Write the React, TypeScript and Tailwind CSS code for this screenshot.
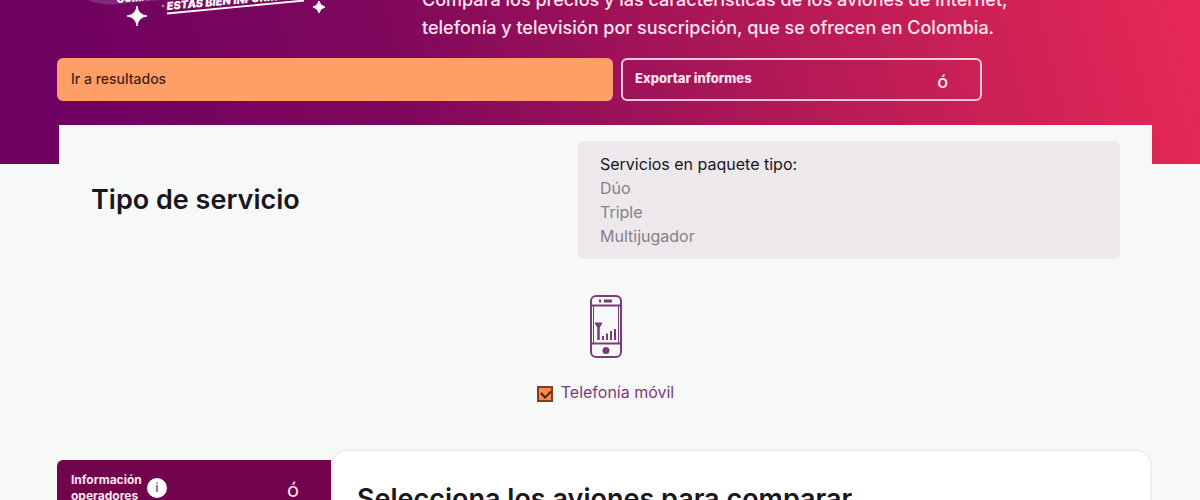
import { useState } from 'react'

const packageTypes = ['Dúo', 'Triple', 'Multijugador']

function CampaignLogo() {
  return (
    <svg width="270" height="42" viewBox="0 0 270 42" aria-hidden="true">
      <path d="M24 -4 Q40 8 72 3 L128 -2 V-8 Z" fill="#822a7c" />
      <text
        x="60"
        y="3"
        fill="#fff"
        fontSize="10"
        fontWeight="900"
        fontStyle="italic"
        fontFamily="Inter, sans-serif"
        transform="rotate(-5 60 3)"
      >
        COMPARA
      </text>
      <path d="M104 -8 L250 -16 L247 -1 L106 12 Z" fill="#7a0660" />
      <text
        x="110"
        y="10"
        fill="#fff"
        fontSize="11"
        fontWeight="900"
        fontStyle="italic"
        fontFamily="Inter, sans-serif"
        transform="rotate(-5 110 10)"
      >
        ESTÁS BIEN INFORMADO
      </text>
      <circle cx="106" cy="6" r="1.5" fill="#a8873c" />
      <path d="M110 13.5 L247 0.5" stroke="#fff" strokeWidth="1.8" />
      <path d="M80 6 Q81 15 90 16 Q81 17 80 26 Q79 17 70 16 Q79 15 80 6 Z" fill="#fff" stroke="#fff" />
      <path d="M262 1 Q263 6 268 7 Q263 8 262 13 Q261 8 256 7 Q261 6 262 1 Z" fill="#fff" stroke="#fff" />
    </svg>
  )
}

function MobileIcon() {
  return (
    <svg width="32" height="63" viewBox="0 0 32 63" fill="none" stroke="#7b3b78" aria-hidden="true">
      <rect x="1" y="1" width="30" height="61" rx="5" strokeWidth="2" />
      <path d="M2 10.5 H30 M2 48.5 H30" strokeWidth="2" />
      <path d="M3.5 10 V49 M28.5 10 V49" strokeWidth="1" />
      <path d="M9 6 H11 M14 6 H22" strokeWidth="3" />
      <path d="M5 28 H12 L9.5 32 H7.5 Z" fill="#7b3b78" />
      <path d="M8.5 30 V45" strokeWidth="2.5" />
      <path d="M13 41 V45 M17 38.5 V45 M21 36 V45 M25 34 V45" strokeWidth="2" />
      <circle cx="16" cy="55.5" r="3.5" fill="#7b3b78" stroke="none" />
    </svg>
  )
}

export default function App() {
  const [mobile, setMobile] = useState(true)

  return (
    <div className="h-screen overflow-hidden bg-[#f7f9f8] font-['Inter',sans-serif] text-[#1b1520]">
      <header className="overflow-hidden bg-[linear-gradient(75deg,#6f0061_5%,#7e075c_33%,#b01857_63%,#e52855_98%)] px-[57px] pb-[63px]">
        <div className="flex items-start">
          <div className="w-[365px] shrink-0">
            <CampaignLogo />
          </div>
          <p className="-mt-3.5 max-w-[600px] text-lg leading-7 font-medium text-[#fde4f0]">
            Compara los precios y las características de los aviones de Internet,
            telefonía y televisión por suscripción, que se ofrecen en Colombia.
          </p>
        </div>
        <div className="mt-4 grid grid-cols-[556fr_361fr_153fr] gap-2">
          <button type="button" className="h-[43px] rounded-md bg-[#ff9f68] px-3.5 pb-0.5 text-left text-sm font-medium text-[#4a1d14]">
            Ir a resultados
          </button>
          <button
            type="button"
            className="flex h-[43px] items-center justify-between rounded-md border-2 border-[#f8c9dc] pr-8 pb-0.5 pl-3 text-[13px] font-extrabold text-[#fde4f0]"
          >
            <span>Exportar informes</span>
            <span className="pt-1.5 text-lg font-medium">ó</span>
          </button>
        </div>
      </header>

      <main>
        <section className="relative -mt-[39px] mr-12 ml-[59px] bg-[#f7f9f8] px-8 pt-4">
          <div className="grid grid-cols-[487fr_542fr] items-center">
            <h2 className="text-[27px] leading-8 font-semibold">Tipo de servicio</h2>
            <div className="rounded-md bg-[#ece8ec] px-[22px] py-[11px] text-base leading-6">
              <p>Servicios en paquete tipo:</p>
              <ul className="text-[#858187]">
                {packageTypes.map((type) => (
                  <li key={type}>{type}</li>
                ))}
              </ul>
            </div>
          </div>

          <div className="mt-9 flex flex-col items-center">
            <MobileIcon />
            <label className="mt-[22px] flex items-center gap-2 text-base leading-6 text-[#7b3b78]">
              <span className="relative mt-1 block size-4">
                <input
                  type="checkbox"
                  checked={mobile}
                  onChange={(e) => setMobile(e.target.checked)}
                  className="block size-4 appearance-none border-2 border-[#78401f] bg-[#f98a4b]"
                />
                {mobile && (
                  <svg viewBox="0 0 16 16" className="pointer-events-none absolute inset-0" fill="none" stroke="#4c2412" strokeWidth="2">
                    <path d="M4 7 L8 11.5 L14 5.5" />
                  </svg>
                )}
              </span>
              Telefonía móvil
            </label>
          </div>
        </section>

        <div className="mt-[45px] mr-12 ml-[57px] grid grid-cols-[274fr_821fr] items-start">
          <button
            type="button"
            className="mt-[11px] flex h-[72px] items-start rounded-tl-md bg-[#72044d] pt-3 pr-8 pl-3.5 text-left text-[#fde4f0]"
          >
            <span className="w-[76px] text-xs leading-4 font-bold">Información operadores</span>
            <span className="mt-1.5 flex size-5 items-center justify-center rounded-full bg-white text-xs leading-none font-bold text-[#8a6a86]">
              i
            </span>
            <span className="mt-1.5 ml-auto text-xl leading-6">ó</span>
          </button>
          <section className="h-[120px] rounded-2xl border-2 border-[#eeeeef] bg-white px-6 pt-8">
            <h2 className="text-[27px] leading-8 font-semibold">Selecciona los aviones para comparar</h2>
          </section>
        </div>
      </main>
    </div>
  )
}
